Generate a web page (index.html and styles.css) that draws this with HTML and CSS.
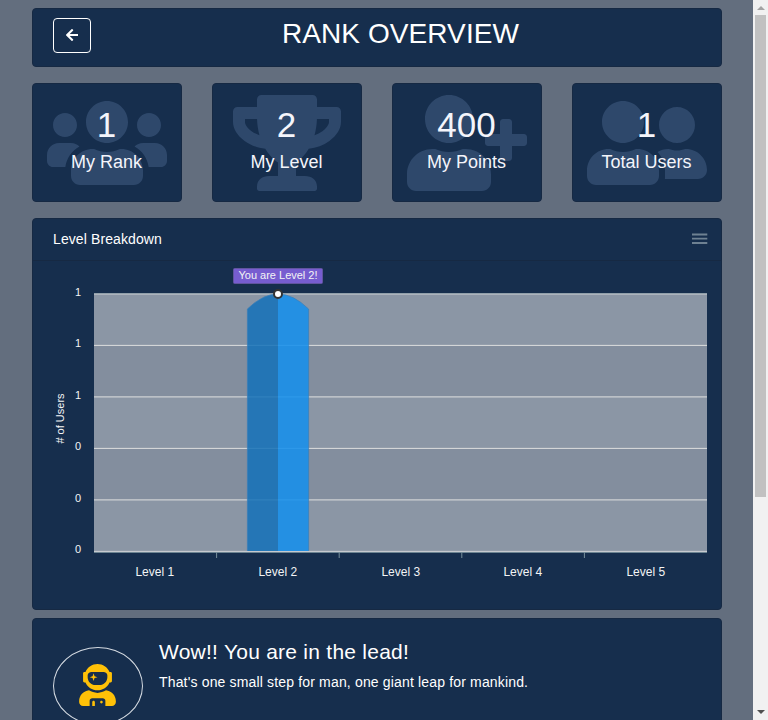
FILE: index.html
```html
<!DOCTYPE html>
<html lang="en">
<head>
<meta charset="utf-8">
<title>Rank Overview</title>
<link rel="stylesheet" href="styles.css">
</head>
<body>
<div class="viewport">
<main class="page">
  <header class="card header">
    <button class="back" aria-label="Back"><svg width="12.25" height="14" viewBox="0 0 448 512"><path fill="#fff" d="M257.5 445.1l-22.2 22.2c-9.4 9.4-24.6 9.4-33.9 0L7 273c-9.4-9.4-9.4-24.6 0-33.9L201.4 44.7c9.4-9.4 24.6-9.4 33.9 0l22.2 22.2c9.5 9.5 9.3 25-.4 34.3L136.6 216H424c13.3 0 24 10.7 24 24v32c0 13.3-10.7 24-24 24H136.6l120.5 114.8c9.8 9.3 10 24.8.4 34.3z"/></svg></button>
    <h1>RANK OVERVIEW</h1>
  </header>
  <section class="stats">
    <div class="card stat">
      <svg class="stat-icon" viewBox="0 0 640 512"><path d="M96 224c35.3 0 64-28.7 64-64s-28.7-64-64-64-64 28.7-64 64 28.7 64 64 64zm448 0c35.3 0 64-28.7 64-64s-28.7-64-64-64-64 28.7-64 64 28.7 64 64 64zm32 32h-64c-17.6 0-33.5 7.1-45.1 18.6 40.3 22.1 68.9 62 75.1 109.4h66c17.7 0 32-14.3 32-32v-32c0-35.3-28.7-64-64-64zm-256 0c61.9 0 112-50.1 112-112S381.9 32 320 32 208 82.1 208 144s50.1 112 112 112zm76.8 32h-8.3c-20.8 10-43.9 16-68.5 16s-47.6-6-68.5-16h-8.3C179.6 288 128 339.6 128 403.2V432c0 26.5 21.5 48 48 48h288c26.5 0 48-21.5 48-48v-28.8c0-63.6-51.6-115.2-115.2-115.2zm-223.7-13.4C161.5 263.1 145.6 256 128 256H64c-35.3 0-64 28.7-64 64v32c0 17.7 14.3 32 32 32h65.9c6.3-47.4 34.9-87.3 75.2-109.4z"/></svg>
      <div class="value">1</div><div class="label">My Rank</div>
    </div>
    <div class="card stat">
      <svg class="stat-icon" viewBox="0 0 576 512"><path d="M552 64H448V24c0-13.3-10.7-24-24-24H152c-13.3 0-24 10.7-24 24v40H24C10.7 64 0 74.7 0 88v56c0 35.7 22.5 72.4 61.9 100.7 31.5 22.7 69.8 37.1 110 41.7C203.3 338.5 240 360 240 360v72h-48c-35.3 0-64 20.7-64 56v12c0 6.6 5.4 12 12 12h296c6.6 0 12-5.4 12-12v-12c0-35.3-28.7-56-64-56h-48v-72s36.7-21.5 68.1-73.6c40.3-4.6 78.6-19 110-41.7 39.3-28.3 61.9-65 61.9-100.7V88c0-13.3-10.7-24-24-24zM99.3 192.8C74.9 175.2 64 155.6 64 144v-16h64.2c1 32.6 5.8 61.2 12.8 86.2-15.1-5.2-29.2-12.4-41.7-21.4zM512 144c0 16.1-17.7 36.1-35.3 48.8-12.5 9-26.7 16.2-41.8 21.4 7-25 11.8-53.6 12.8-86.2H512v16z"/></svg>
      <div class="value">2</div><div class="label">My Level</div>
    </div>
    <div class="card stat">
      <svg class="stat-icon" viewBox="0 0 640 512"><path d="M624 208h-64v-64c0-8.8-7.2-16-16-16h-32c-8.8 0-16 7.2-16 16v64h-64c-8.8 0-16 7.2-16 16v32c0 8.8 7.2 16 16 16h64v64c0 8.8 7.2 16 16 16h32c8.8 0 16-7.2 16-16v-64h64c8.8 0 16-7.2 16-16v-32c0-8.8-7.2-16-16-16zm-400 48c70.7 0 128-57.3 128-128S294.7 0 224 0 96 57.3 96 128s57.3 128 128 128zm89.6 32h-16.7c-22.2 10.2-46.9 16-72.9 16s-50.6-5.8-72.9-16h-16.7C60.2 288 0 348.2 0 422.4V464c0 26.5 21.5 48 48 48h352c26.5 0 48-21.5 48-48v-41.6c0-74.2-60.2-134.4-134.4-134.4z"/></svg>
      <div class="value">400</div><div class="label">My Points</div>
    </div>
    <div class="card stat">
      <svg class="stat-icon" viewBox="0 0 640 512"><path d="M192 256c61.9 0 112-50.1 112-112S253.9 32 192 32 80 82.1 80 144s50.1 112 112 112zm76.8 32h-8.3c-20.8 10-43.9 16-68.5 16s-47.6-6-68.5-16h-8.3C51.6 288 0 339.6 0 403.2V432c0 26.5 21.5 48 48 48h288c26.5 0 48-21.5 48-48v-28.8c0-63.6-51.6-115.2-115.2-115.2zM480 256c53 0 96-43 96-96s-43-96-96-96-96 43-96 96 43 96 96 96zm48 32h-3.8c-13.9 4.8-28.6 8-44.2 8s-30.3-3.2-44.2-8H432c-20.4 0-39.2 5.9-55.7 15.4 24.4 26.3 39.7 61.2 39.7 99.8v38.4c0 2.2-.5 4.3-.6 6.4H592c26.5 0 48-21.5 48-48 0-61.9-50.1-112-112-112z"/></svg>
      <div class="value">1</div><div class="label">Total Users</div>
    </div>
  </section>
  <section class="card breakdown">
    <div class="card-head"><h2>Level Breakdown</h2>
      <svg width="16" height="12" viewBox="0 0 16 12"><path d="M0 1.5h15.3M0 5.7h15.3M0 10h15.3" stroke="#6e8192" stroke-width="1.8"/></svg>
    </div>
    <svg class="chart" width="688" height="348" viewBox="33 261 688 348">
      <g fill="#8b96a5"><path d="M94 294h613v51.5H94z"/><path d="M94 397h613v51.5H94z"/><path d="M94 500h613v51.5H94z"/></g>
      <g fill="#838e9e"><path d="M94 345.5h613V397H94z"/><path d="M94 448.5h613V500H94z"/></g>
      <path d="M94 293.9h613M94 345.4h613M94 396.9h613M94 448.4h613M94 499.9h613M94 551.4h613" stroke="#e0e0e0" fill="none"/>
      <path d="M94 293.5h613" stroke="#90a4ae" stroke-opacity=".5"/>
      <path d="M94 552.4h613" stroke="#78909c"/>
      <path d="M216.6 552v6M339.2 552v6M461.8 552v6M584.4 552v6" stroke="#78909c"/>
      <path d="M247.4 551V309Q262.7 294 278 294V551z" fill="#1371b9" fill-opacity=".85"/>
      <path d="M278 551V294Q293.3 294 308.6 309V551z" fill="#1690ec" fill-opacity=".88"/>
      <path d="M247.4 551V309Q262.7 294 278 294T308.6 309V551" fill="none" stroke="#397fb9" stroke-opacity=".7"/>
      <rect x="233.5" y="268.5" width="89" height="15" rx="1" fill="#775dd0" stroke="#61549f"/>
      <text x="278" y="279" class="note">You are Level 2!</text>
      <circle cx="278" cy="294" r="4" fill="#fff" stroke="#333" stroke-width="2"/>
      <g class="y-labels"><text x="81" y="296">1</text><text x="81" y="347">1</text><text x="81" y="399">1</text><text x="81" y="450">0</text><text x="81" y="502">0</text><text x="81" y="553">0</text></g>
      <g class="x-labels"><text x="154.8" y="576">Level 1</text><text x="277.8" y="576">Level 2</text><text x="400.8" y="576">Level 3</text><text x="522.8" y="576">Level 4</text><text x="645.8" y="576">Level 5</text></g>
      <text class="axis-title" transform="translate(64 418.5) rotate(-90)">#&#160;of Users</text>
    </svg>
  </section>
  <section class="card lead">
    <div class="avatar"><svg viewBox="0 0 448 512"><path d="M64 224h13.5c24.7 56.5 80.9 96 146.5 96s121.8-39.5 146.5-96H384c8.8 0 16-7.2 16-16v-96c0-8.8-7.2-16-16-16h-13.5C345.8 39.5 289.6 0 224 0S102.2 39.5 77.5 96H64c-8.8 0-16 7.2-16 16v96c0 8.8 7.2 16 16 16zm40-88c0-22.1 21.5-40 48-40h144c26.5 0 48 17.9 48 40v24c0 53-43 96-96 96h-48c-53 0-96-43-96-96v-24zm72 72l12-36 36-12-36-12-12-36-12 36-36 12 36 12 12 36zm151.6 113.4C297.7 340.7 262.2 352 224 352s-73.7-11.3-103.6-30.6C52.9 328.5 0 385 0 454.4v9.6c0 26.5 21.5 48 48 48h80v-64c0-17.7 14.3-32 32-32h128c17.7 0 32 14.3 32 32v64h80c26.5 0 48-21.5 48-48v-9.6c0-69.4-52.9-125.9-120.4-133zM272 448c-8.8 0-16 7.2-16 16s7.2 16 16 16 16-7.2 16-16-7.2-16-16-16zm-96 0c-8.8 0-16 7.2-16 16v48h32v-48c0-8.8-7.2-16-16-16z"/></svg></div>
    <div class="message"><h3>Wow!! You are in the lead!</h3><p>That's one small step for man, one giant leap for mankind.</p></div>
  </section>
</main>
<aside class="scrollbar"><i class="up"></i><i class="thumb"></i><i class="down"></i></aside>
</div>
</body>
</html>
```
FILE: styles.css
```css
* { box-sizing: border-box; }
body { margin: 0; background: #636e7e; color: #fff; font-family: "Liberation Sans", Arial, sans-serif; overflow: hidden; }
h1, h2, h3, p { margin: 0; font-weight: 400; }
svg { display: block; }
.viewport { display: flex; height: 720px; overflow: hidden; }
.page { flex: 1; padding: 8px 31px 0 32px; }
.card { background: #162e4d; border: 1px solid #162943; border-radius: 4px; }
.header { display: flex; align-items: flex-start; height: 59px; padding: 9px 20px; margin-bottom: 16px; }
.back { width: 38px; height: 35px; padding: 0 0 1px; display: flex; align-items: center; justify-content: center; background: none; border: 1px solid #fff; border-radius: 4px; }
h1 { flex: 1; text-align: center; font-size: 28px; line-height: 32px; padding-left: 9px; letter-spacing: .08px; }
.stats { display: grid; grid-template-columns: repeat(4, 150px); gap: 30px; margin-bottom: 16px; }
.stat { height: 119px; text-align: center; position: relative; padding-top: 20px; }
.stat-icon { position: absolute; top: 11px; left: 0; width: 100%; height: 96px; fill: #2e486b; }
.value, .label { position: relative; color: #f4f5fb; padding-right: 1px; }
.value { font-size: 35px; line-height: 42px; }
.label { font-size: 18px; line-height: 22px; margin-top: 5px; }
.breakdown { height: 392px; margin-bottom: 8px; }
.card-head { display: flex; justify-content: space-between; align-items: center; height: 42px; padding: 0 13px 1px 20px; border-bottom: 1px solid #162943; }
h2 { font-size: 14px; letter-spacing: .1px; }
text { fill: #f3f4f5; text-anchor: middle; font-size: 12px; }
.note, .axis-title { font-size: 11px; }
.y-labels text { text-anchor: end; font-size: 11px; }
.lead { height: 140px; display: flex; padding: 28px 20px; gap: 16px; }
.avatar { width: 90px; height: 78px; padding: 0 2px 2px 0; border: 1px solid #d5dbe2; border-radius: 50%; display: flex; justify-content: center; align-items: center; }
.avatar svg { width: 37px; height: 42px; fill: #ffc107; }
.message { margin-top: -7px; }
h3 { font-size: 21px; line-height: 24px; letter-spacing: .25px; }
p { font-size: 14px; line-height: 20px; margin-top: 8px; letter-spacing: .16px; }
.scrollbar { width: 15px; background: #f1f1f1; display: flex; flex-direction: column; align-items: center; }
.thumb { width: 11px; height: 482px; background: #c1c1c1; margin-bottom: auto; }
.up { border: 4px solid transparent; border-top: 0; border-bottom-color: #a3a3a3; margin: 6px 0 5px; }
.down { border: 4px solid transparent; border-bottom: 0; border-top-color: #505050; margin-bottom: 6px; }
```
